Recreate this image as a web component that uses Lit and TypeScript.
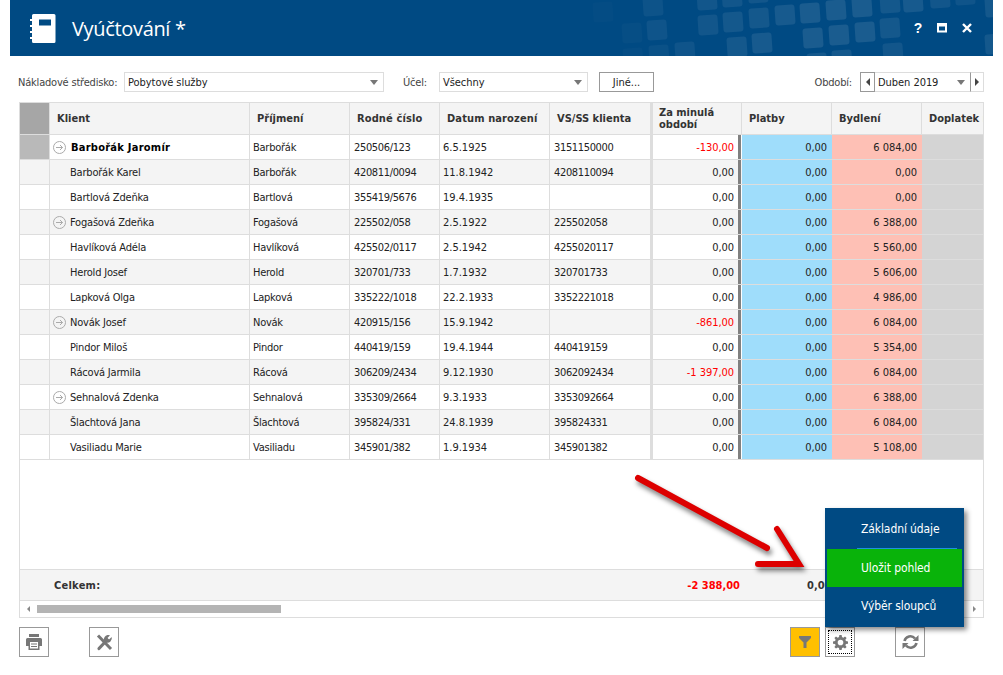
import { LitElement, html, css, svg } from "lit";
import { customElement } from "lit/decorators.js";

type Row = { n: string; s: string; r: string; d: string; v: string; z: string; b: string; arrow?: boolean; bold?: boolean };
const rows: Row[] = [
  { n: "Barbořák Jaromír", s: "Barbořák", r: "250506/123", d: "6.5.1925", v: "3151150000", z: "-130,00", b: "6 084,00", arrow: true, bold: true },
  { n: "Barbořák Karel", s: "Barbořák", r: "420811/0094", d: "11.8.1942", v: "4208110094", z: "0,00", b: "0,00" },
  { n: "Bartlová Zdeňka", s: "Bartlová", r: "355419/5676", d: "19.4.1935", v: "", z: "0,00", b: "0,00" },
  { n: "Fogašová Zdeňka", s: "Fogašová", r: "225502/058", d: "2.5.1922", v: "225502058", z: "0,00", b: "6 388,00", arrow: true },
  { n: "Havlíková Adéla", s: "Havlíková", r: "425502/0117", d: "2.5.1942", v: "4255020117", z: "0,00", b: "5 560,00" },
  { n: "Herold Josef", s: "Herold", r: "320701/733", d: "1.7.1932", v: "320701733", z: "0,00", b: "5 606,00" },
  { n: "Lapková Olga", s: "Lapková", r: "335222/1018", d: "22.2.1933", v: "3352221018", z: "0,00", b: "4 986,00" },
  { n: "Novák Josef", s: "Novák", r: "420915/156", d: "15.9.1942", v: "", z: "-861,00", b: "6 084,00", arrow: true },
  { n: "Pindor Miloš", s: "Pindor", r: "440419/159", d: "19.4.1944", v: "440419159", z: "0,00", b: "5 354,00" },
  { n: "Rácová Jarmila", s: "Rácová", r: "306209/2434", d: "9.12.1930", v: "3062092434", z: "-1 397,00", b: "6 084,00" },
  { n: "Sehnalová Zdenka", s: "Sehnalová", r: "335309/2664", d: "9.3.1933", v: "3353092664", z: "0,00", b: "6 388,00", arrow: true },
  { n: "Šlachtová Jana", s: "Šlachtová", r: "395824/331", d: "24.8.1939", v: "395824331", z: "0,00", b: "6 084,00" },
  { n: "Vasiliadu Marie", s: "Vasiliadu", r: "345901/382", d: "1.9.1934", v: "345901382", z: "0,00", b: "5 108,00" },
];

// x, y (page coordinates) and opacity of the squares in the header's backdrop
const squares: [number, number, number][] = [
  [593,2,.015],[622,23,.025],[623,48,.02],[643,-4,.05],[647,20,.06],[649,45,.04],[675,42,.06],
  [697,-10,.07],[698,15,.07],[722,-13,.07],[723,12,.08],[748,-17,.07],[749,8,.08],[775,5,.09],[800,3,.1],[826,0,.1],[852,-3,.1],
  [727,37,.08],[752,33,.09],[803,28,.1],[829,25,.1],[855,22,.1],[880,18,.08],[880,-7,.08],[903,-8,.09],[930,-12,.07],[955,-15,.06],
  [807,53,.08],[832,50,.08],[883,43,.07],[985,-3,.08],[985,34,.08],
];

@customElement("app-root")
export class AppRoot extends LitElement {
  static styles = css`
    :host { display: block; width: 1003px; height: 675px; background: #fff; position: relative; overflow: hidden;
      font-family: "DejaVu Sans", sans-serif; font-stretch: condensed; font-size: 11px; color: #222; }
    .app { display: flex; flex-direction: column; padding-left: 10px; padding-right: 10px; }
    .head { height: 56px; background: #004a83; position: relative; overflow: hidden; display: flex; align-items: center; padding-left: 19px; color: #fff; }
    .pattern { position: absolute; left: 0; top: 0; }
    .logo { position: relative; margin-right: 16px; }
    .title { position: relative; font-family: "Open Sans", sans-serif; font-stretch: normal; font-size: 20px; letter-spacing: -.33px; }
    .winbtns { position: absolute; right: 20px; top: 20px; display: flex; align-items: center; }
    .winbtns svg { display: block; }
    .main { padding: 16px 9px 0; display: flex; flex-direction: column; width: 965px; }
    .filters { display: flex; align-items: center; height: 20px; }
    .lbl { color: #444; letter-spacing: -.2px; white-space: nowrap; }
    .sel { height: 20px; box-sizing: border-box; border: 1px solid #ddd; display: flex; align-items: center; justify-content: space-between; padding: 0 5px 0 3px; background: #fff; letter-spacing: -.05px; }
    .caret { width: 0; height: 0; border: 4px solid transparent; border-top: 5px solid #777; border-bottom: 0; }
    .btn-other { width: 55px; height: 20px; box-sizing: border-box; border: 1px solid #999; display: flex; align-items: center; justify-content: center; margin-left: 11px; }
    .period { display: flex; margin-left: auto; align-items: center; }
    .step { width: 15px; height: 20px; box-sizing: border-box; border: 1px solid #999; display: flex; align-items: center; justify-content: center; }
    .step.right { width: 14px; border-color: #ddd #ddd #ddd #999; }
    .period .sel { width: 95px; border-left: 0; border-right: 0; }
    .tri-l { width: 0; height: 0; border: 4px solid transparent; border-right: 4px solid #444; border-left: 0; }
    .tri-r { width: 0; height: 0; border: 4px solid transparent; border-left: 4px solid #444; border-right: 0; }
    .grid { margin-top: 10px; height: 516px; box-sizing: border-box; border: 1px solid #ddd; display: flex; flex-direction: column; overflow: hidden; }
    .table { flex: 1; min-height: 0; overflow: hidden; }
    .r { display: grid; grid-template-columns: 30px 200px 100px 90px 110px 101px 91px 90px 90px 70px; height: 25px; box-sizing: border-box; border-bottom: 1px solid #ddd; width: 980px; }
    .r.alt { background: #f4f4f4; }
    .r.hd { height: 32px; background: #f4f4f4; font-weight: 700; color: #333; }
    .c { border-right: 1px solid #ddd; display: flex; align-items: center; padding-left: 3px; white-space: nowrap; overflow: hidden; min-width: 0; }
    .hd .c { padding-left: 7px; }
    .hd .c.wide { letter-spacing: .12px; }
    .hd .c.z { line-height: 12px; white-space: normal; padding-left: 6px; border-left: 2px solid #ddd; }
    .c.gut { padding: 0; }
    .hd .c.gut { background: #a6a6a6; padding: 0; }
    .sel-gut { background: #b9b9b9; }
    .c.name { padding-left: 20px; letter-spacing: -.2px; }
    .c.name.ar { padding-left: 3px; gap: 4px; }
    .c.name.b { font-weight: 700; color: #000; letter-spacing: .25px; gap: 5px; }
    .c.sur { letter-spacing: -.25px; }
    .c.digits { letter-spacing: -.35px; padding-left: 4px; }
    .num { justify-content: flex-end; padding: 0 5px 0 0; letter-spacing: -.05px; }
    .zc { background: #fff; border-right: 3px solid #808080; border-left: 2px solid #ddd; padding-right: 4px; margin-right: 1px; }
    .alt .zc { background: #f4f4f4; }
    .red { color: #f00; }
    .blue { background: #9fddfb; border-right: 0; }
    .pink { background: #fec0b5; border-right: 0; }
    .gray { background: #d4d4d4; border-right: 0; }
    .foot { height: 32px; flex: none; box-sizing: border-box; background: #f4f4f4; border-top: 1px solid #ddd; border-bottom: 1px solid #ddd; display: flex; align-items: center; font-weight: 700; position: relative; }
    .foot .ck { margin-left: 34px; width: 600px; color: #333; letter-spacing: .25px; }
    .foot .sum { width: 86px; text-align: right; color: #f00; }
    .foot .zero { margin-left: 67px; color: #333; }
    .sbar { height: 16px; flex: none; display: flex; align-items: center; padding: 0 7px; position: relative; gap: 7px; }
    .sbar .thumb { width: 244px; height: 8px; background: #b4b4b4; }
    .sbar .tri-r { margin-left: auto; border-width: 3px; border-left-color: #888; }
    .sbar .tri-l { border-width: 3px; border-right-color: #888; }
    .tools { display: flex; margin-top: 9px; height: 30px; }
    .tb { width: 30px; height: 30px; box-sizing: border-box; border: 1px solid #999; display: flex; align-items: center; justify-content: center; background: #fff; }
    .tb.y { background: #ffc000; }
    .tb.dot { position: relative; }
    .tb.dot::after { content: ""; position: absolute; inset: 2px; border: 1px dotted #000; }
    .menu { position: absolute; left: 825px; top: 508px; width: 139px; height: 119px; background: #004a83; box-shadow: 3px 3px 5px rgba(0,0,0,.45); color: #fff;
      font-size: 12px; letter-spacing: -.1px; padding: 2px; box-sizing: border-box; display: flex; flex-direction: column; }
    .mi { display: flex; align-items: center; padding: 0 0 0 34px; height: 38px; box-sizing: border-box; position: relative; }
    .mi.first { height: 39px; padding-bottom: 2px; }
    .mi.first::after { content: ""; position: absolute; left: 30px; right: 5px; bottom: 0; height: 1px; background: #1e90e0; }
    .mi.g { background: #09b30a; }
    .arrow { position: absolute; left: 0; top: 0; pointer-events: none; }
  `;

  private sel(w: number, t: string, ml = 0) {
    return html`<div class="sel" style="width:${w}px;margin-left:${ml}px"><span>${t}</span><span class="caret"></span></div>`;
  }

  render() {
    return html`
      <div class="app">
        <div class="head">
          <svg class="pattern" width="983" height="56">
            ${squares.map(([x, y, o]) => svg`<rect x=${x - 10} y=${y} width="20" height="20" rx="3" fill="#fff" opacity=${o} transform="rotate(-4 ${x} ${y + 10})"></rect>`)}
          </svg>
          <svg class="logo" width="27" height="29" viewBox="0 0 27 29">
            <path fill="#fff" d="M3 1.500A1.500 1.500 0 0 1 4.500 0H25a1.500 1.500 0 0 1 1.500 1.500v26A1.500 1.500 0 0 1 25 29H4.500A1.500 1.500 0 0 1 3 27.500V25H1v-2h2v-4H1v-2h2v-4H1v-2h2V7H1V5h2z"/>
            <rect x="10" y="5.500" width="12" height="6" fill="#004a83"/>
          </svg>
          <span class="title">Vyúčtování *</span>
          <div class="winbtns">
            <svg width="14" height="16" viewBox="0 0 14 16"><text x="7" y="13" text-anchor="middle" font-family="Liberation Sans" font-weight="700" font-size="14" fill="#fff">?</text></svg>
            <svg style="margin-left:11px" width="12" height="12" viewBox="0 0 12 12"><path fill="#fff" fill-rule="evenodd" d="M1 1h10v9.500H1zM3 4.500v4h6v-4z" /></svg>
            <svg style="margin-left:13px" width="12" height="12" viewBox="0 0 12 12"><path d="M2 2l8 8M10 2l-8 8" stroke="#fff" stroke-width="2.400"/></svg>
          </div>
        </div>
        <div class="main">
          <div class="filters">
            <span class="lbl" style="width:105px;margin-left:-1px">Nákladové středisko:</span>
            ${this.sel(260, "Pobytové služby", 1)}
            <span class="lbl" style="margin-left:19px;width:24px">Účel:</span>
            ${this.sel(149, "Všechny", 12)}
            <div class="btn-other">Jiné...</div>
            <div class="period">
              <span class="lbl">Období:</span>
              <div class="step" style="margin-left:8px"><span class="tri-l"></span></div>
              <div class="sel"><span>Duben 2019</span><span class="caret"></span></div>
              <div class="step right"><span class="tri-r"></span></div>
            </div>
          </div>
          <div class="grid">
            <div class="table">
              <div class="r hd">
                <div class="c gut"></div><div class="c">Klient</div><div class="c">Příjmení</div><div class="c wide">Rodné číslo</div><div class="c wide">Datum narození</div><div class="c">VS/SS klienta</div>
                <div class="c z">Za minulá období</div><div class="c">Platby</div><div class="c">Bydlení</div><div class="c">Doplatek na</div>
              </div>
              ${rows.map((x, i) => html`
                <div class="r ${i % 2 ? "alt" : ""}">
                  <div class="c gut ${i === 0 ? "sel-gut" : ""}"></div>
                  <div class="c name ${x.arrow ? "ar" : ""} ${x.bold ? "b" : ""}">
                    ${x.arrow ? html`<svg width="13" height="13" viewBox="0 0 13 13" fill="none" stroke="#aaa"><circle cx="6.500" cy="6.500" r="6"/><path d="M3 6.500h6.500M7 4l2.500 2.500L7 9"/></svg>` : ""}
                    <span>${x.n}</span>
                  </div>
                  <div class="c sur">${x.s}</div><div class="c digits">${x.r}</div><div class="c">${x.d}</div><div class="c digits">${x.v}</div>
                  <div class="c num zc ${x.z.startsWith("-") ? "red" : ""}">${x.z}</div>
                  <div class="c num blue">0,00</div>
                  <div class="c num pink">${x.b}</div>
                  <div class="c num gray"></div>
                </div>`)}
            </div>
            <div class="foot"><span class="ck">Celkem:</span><span class="sum">-2 388,00</span><span class="zero">0,00</span></div>
            <div class="sbar"><span class="tri-l"></span><span class="thumb"></span><span class="tri-r"></span></div>
          </div>
          <div class="tools">
            <div class="tb"><svg width="16" height="16" viewBox="0 0 16 16"><path fill="#777" fill-rule="evenodd" d="M3 0h10v3H3zM1.500 4h13A1.500 1.500 0 0 1 16 5.500V12h-2.500v4h-11v-4H0V5.500A1.500 1.500 0 0 1 1.500 4zM4 8v6.500h8V8zM5 9.500h6v1H5zM5 12h6v1H5z"/></svg></div>
            <div class="tb" style="margin-left:40px"><svg width="17" height="17" viewBox="0 0 17 17"><path fill="none" stroke="#777" stroke-width="3" d="M2 1.500L15 15"/><path fill="none" stroke="#777" stroke-width="3.200" stroke-linecap="round" d="M3 14.500L11 6"/><path fill="#777" d="M11.500 1a4.500 4.500 0 0 1 2.500.3L11.500 4 13 5.500l2.700-2.500A4.500 4.500 0 0 1 10 8.500L8 6.500A4.500 4.500 0 0 1 11.500 1z"/></svg></div>
            <div class="tb y" style="margin-left:671px"><svg width="12" height="12" viewBox="0 0 12 12"><path fill="#777" d="M0 0h12v2L7.500 6.500V12h-3V6.500L0 2z"/></svg></div>
            <div class="tb dot" style="margin-left:5px"><svg width="15" height="15" viewBox="0 0 16 16"><path fill="#777" fill-rule="evenodd" d="M6.800 0h2.400l.4 2.200 1.400.6L12.800 1.500l1.700 1.700-1.300 1.800.6 1.400 2.200.4v2.400l-2.200.4-.6 1.400 1.300 1.800-1.700 1.700-1.800-1.300-1.400.6L9.200 16H6.800l-.4-2.200-1.400-.6-1.800 1.300-1.700-1.700 1.300-1.800-.6-1.400L0 9.200V6.800l2.200-.4.6-1.400L1.500 3.200l1.700-1.700L5 2.800l1.400-.6zM8 5a3 3 0 1 0 0 6 3 3 0 0 0 0-6z"/></svg></div>
            <div class="tb" style="margin-left:40px"><svg width="17" height="16" viewBox="0 0 17 16"><path fill="none" stroke="#777" stroke-width="2.600" d="M2.500 7a6 6 0 0 1 10.500-2.500M14.500 9a6 6 0 0 1-10.500 2.500"/><path fill="#777" d="M10.500 7H16.500V1zM6.500 9H.5v6z"/></svg></div>
          </div>
        </div>
      </div>
      <div class="menu">
        <div class="mi first">Základní údaje</div>
        <div class="mi g">Uložit pohled</div>
        <div class="mi">Výběr sloupců</div>
      </div>
      <svg class="arrow" width="1003" height="675">
        <defs><filter id="s" x="-20%" y="-20%" width="140%" height="140%"><feGaussianBlur stdDeviation="2.500"/></filter></defs>
        <path d="M638 478L767 548M777 529L799 564H758" fill="none" stroke="#000" stroke-opacity=".5" stroke-width="6" stroke-linecap="round" transform="translate(2 4)" filter="url(#s)"/>
        <path d="M638 478L767 548M777 529L799 564H758" fill="none" stroke="#dd0000" stroke-width="6" stroke-linecap="round"/>
      </svg>
    `;
  }
}
